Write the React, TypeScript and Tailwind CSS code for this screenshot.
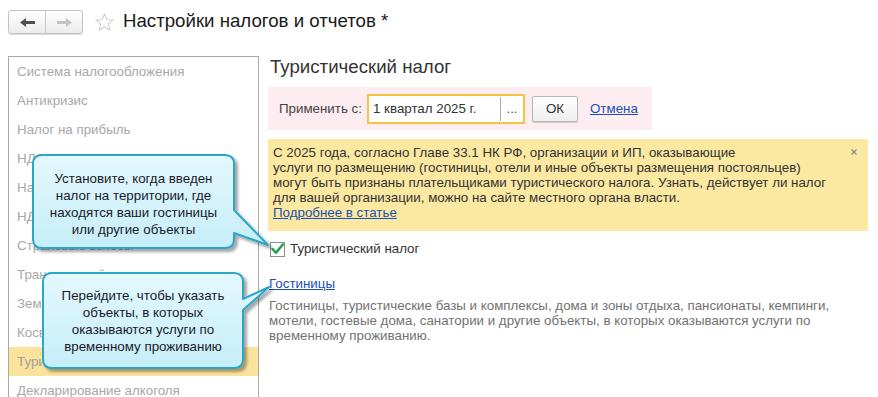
import React from "react";

const leftItems = [
  "Система налогообложения",
  "Антикризис",
  "Налог на прибыль",
  "НДС",
  "Налог на имущество",
  "НДФЛ",
  "Страховые взносы",
  "Транспортный налог",
  "Земельный налог",
  "Косвенные налоги",
  "Туристический налог",
  "Декларирование алкоголя",
];

function NavButtons() {
  return (
    <div className="flex h-[24px] w-[75px] rounded-[3px] border border-[#c3c3c3] bg-gradient-to-b from-white to-[#ececec] shadow-[0_1px_1px_rgba(0,0,0,0.15)]">
      <div className="flex w-[37px] items-center justify-center border-r border-[#c9c9c9]">
        <svg width="15" height="9" viewBox="0 0 15 9">
          <path d="M0 4.5 L6 0 V3 H15 V6 H6 V9 Z" fill="#4f4f4f" />
        </svg>
      </div>
      <div className="flex flex-1 items-center justify-center">
        <svg width="15" height="9" viewBox="0 0 15 9">
          <path d="M15 4.5 L9 0 V3 H0 V6 H9 V9 Z" fill="#c4c4c4" />
        </svg>
      </div>
    </div>
  );
}

function Star() {
  return (
    <svg width="19" height="18" viewBox="0 0 24 23">
      <polygon
        points="12,1 15,8.6 23,9 16.8,14.2 18.8,22 12,17.6 5.2,22 7.2,14.2 1,9 9,8.6"
        fill="none"
        stroke="#cdcdcd"
        strokeWidth="1.3"
        strokeLinejoin="round"
      />
    </svg>
  );
}

export default function App() {
  return (
    <div className="relative h-[397px] w-[878px] overflow-hidden bg-white font-['Liberation_Sans',Arial,sans-serif] text-[13.33px] text-[#333]">
      {/* Header */}
      <div className="flex h-[56px] items-start pl-[8px] pt-[10px]">
        <NavButtons />
        <div className="ml-[12px] mt-[3px]">
          <Star />
        </div>
        <div className="ml-[9px] text-[18.67px] leading-[22px] text-[#1a1a1a]">
          Настройки налогов и отчетов *
        </div>
      </div>

      {/* Main */}
      <div className="flex pl-[8px]">
        {/* Left list */}
        <div className="h-[360px] w-[251px] shrink-0 border border-[#a9a9a9]">
          {leftItems.map((t, i) => (
            <div
              key={t}
              className={
                i === 10
                  ? "flex h-[29px] items-center bg-[#fce39c] px-[8px] text-[#a0a0a0]"
                  : "flex h-[29px] items-center px-[8px] text-[#a8a8a8]"
              }
            >
              {t}
            </div>
          ))}
        </div>

        {/* Right content */}
        <div className="ml-[9px] flex flex-col">
          <div className="pl-[2px] text-[18.67px] leading-[21px] text-[#333]">
            Туристический налог
          </div>

          <div className="mt-[10px] flex h-[43px] w-[384px] items-center bg-[#fdedf0] pl-[11px]">
            <div className="w-[88px] text-[#444]">Применить с:</div>
            <div className="flex h-[30px] w-[158px] border-2 border-[#f5c242] bg-white">
              <div className="flex flex-1 items-center pl-[4px] text-[#333]">
                1 квартал 2025 г.
              </div>
              <div className="my-[1px] flex w-[23px] items-center justify-center border-l border-[#b0b0b0] text-[#555]">
                ...
              </div>
            </div>
            <div className="ml-[7px] flex h-[26px] w-[46px] items-center justify-center rounded-[2px] border border-[#b5b5b5] bg-gradient-to-b from-white to-[#eeeeee] text-[#333] shadow-[0_1px_1px_rgba(0,0,0,0.15)]">
              ОК
            </div>
            <div className="ml-[12px] text-[#1b4fb3] underline">Отмена</div>
          </div>

          <div className="relative mt-[9px] h-[92px] w-[600px] bg-[#fbe8a1] pl-[5px] pt-[6px] leading-[15px] text-[#333]">
            С 2025 года, согласно Главе 33.1 НК РФ, организации и ИП, оказывающие
            <br />
            услуги по размещению (гостиницы, отели и иные объекты размещения постояльцев)
            <br />
            могут быть признаны плательщиками туристического налога. Узнать, действует ли налог
            <br />
            для вашей организации, можно на сайте местного органа власти.
            <br />
            <span className="text-[#1b4fb3] underline">Подробнее в статье</span>
            <svg
              className="absolute right-[11px] top-[10px]"
              width="6"
              height="6"
              viewBox="0 0 6 6"
            >
              <path d="M0.5 0.5 L5.5 5.5 M5.5 0.5 L0.5 5.5" stroke="#888" strokeWidth="1.2" />
            </svg>
          </div>

          <div className="mt-[10px] flex h-[16px] items-center pl-[2px]">
            <div className="flex h-[15px] w-[15px] items-center justify-center border border-[#8e8e8e] bg-white">
              <svg width="13" height="12" viewBox="0 0 13 12">
                <path
                  d="M1.5 6 L5 9.8 L11.8 1.5"
                  fill="none"
                  stroke="#17a04a"
                  strokeWidth="2.4"
                  strokeLinecap="round"
                  strokeLinejoin="round"
                />
              </svg>
            </div>
            <div className="ml-[5px] text-[#333]">Туристический налог</div>
          </div>

          <div className="mt-[19px] pl-[1px] leading-[15px] text-[#1b4fb3] underline">
            Гостиницы
          </div>

          <div className="mt-[7px] pl-[1px] leading-[15px] text-[#727272]">
            Гостиницы, туристические базы и комплексы, дома и зоны отдыха, пансионаты, кемпинги,
            <br />
            мотели, гостевые дома, санатории и другие объекты, в которых оказываются услуги по
            <br />
            временному проживанию.
          </div>
        </div>
      </div>

      {/* Callouts overlay */}
      <svg
        className="pointer-events-none absolute left-0 top-0"
        width="878"
        height="397"
        viewBox="0 0 878 397"
      >
        <defs>
          <linearGradient id="cg" x1="0" y1="0" x2="0" y2="1">
            <stop offset="0" stopColor="#e4f8fe" />
            <stop offset="1" stopColor="#c6eef9" />
          </linearGradient>
          <filter id="sh" x="-10%" y="-10%" width="130%" height="130%">
            <feDropShadow dx="3" dy="3" stdDeviation="1.6" floodColor="#000" floodOpacity="0.35" />
          </filter>
        </defs>
        <path
          d="M42 155 H225 Q234 155 234 164 V210 L268 245 L234 233 V239 Q234 248 225 248 H42 Q33 248 33 239 V164 Q33 155 42 155 Z"
          fill="url(#cg)"
          stroke="#2aa6c8"
          strokeWidth="2"
          strokeLinejoin="round"
          filter="url(#sh)"
        />
        <path
          d="M52 273 H234 Q243 273 243 282 V299 L269 287 L243 310 V359 Q243 368 234 368 H52 Q43 368 43 359 V282 Q43 273 52 273 Z"
          fill="url(#cg)"
          stroke="#2aa6c8"
          strokeWidth="2"
          strokeLinejoin="round"
          filter="url(#sh)"
        />
      </svg>

      <div className="absolute left-[33px] top-[170px] w-[201px] text-center leading-[17px] text-[#1b1b2a]">
        Установите, когда введен
        <br />
        налог на территории, где
        <br />
        находятся ваши гостиницы
        <br />
        или другие объекты
      </div>
      <div className="absolute left-[43px] top-[287px] w-[200px] text-center leading-[17px] text-[#1b1b2a]">
        Перейдите, чтобы указать
        <br />
        объекты, в которых
        <br />
        оказываются услуги по
        <br />
        временному проживанию
      </div>
    </div>
  );
}
